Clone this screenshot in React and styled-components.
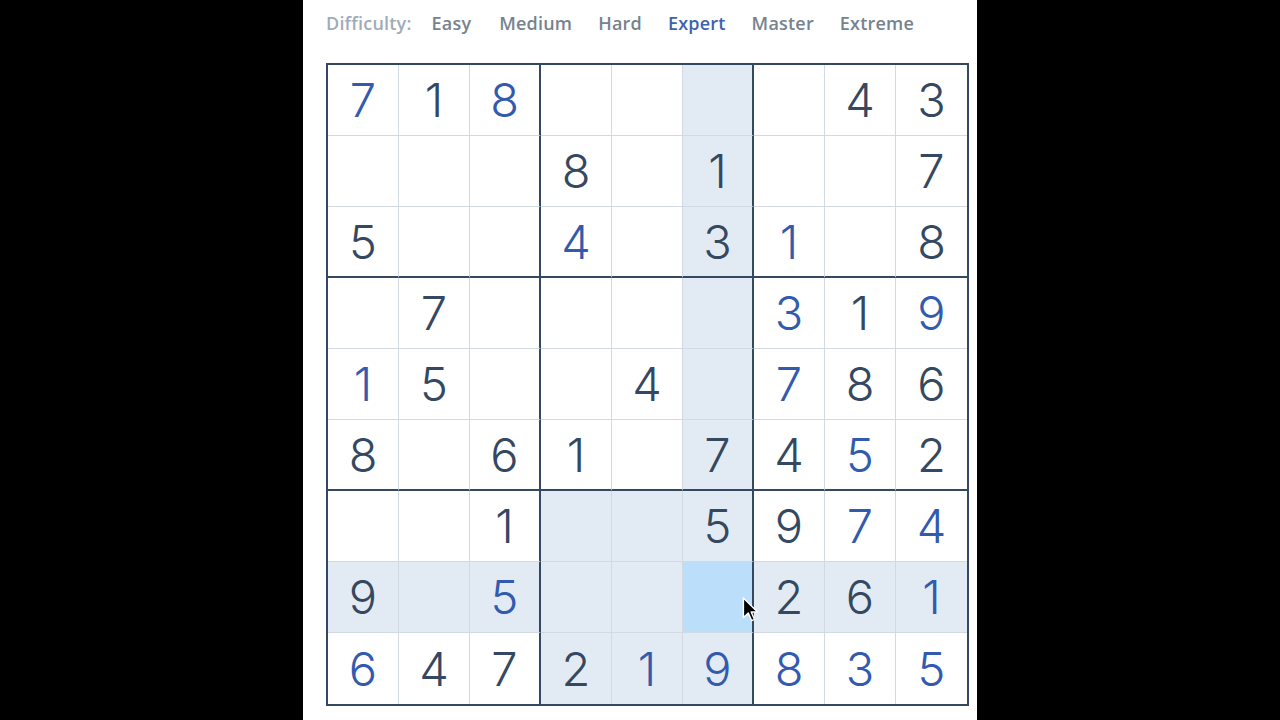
import React from 'react';
import styled, { createGlobalStyle } from 'styled-components';

const GlobalStyle = createGlobalStyle`
  html, body {
    margin: 0;
    padding: 0;
    background: #000;
    height: 100%;
  }
  #root {
    height: 100%;
  }
`;

const Screen = styled.div`
  width: 1280px;
  height: 720px;
  background: #000;
  display: flex;
  justify-content: center;
  overflow: hidden;
`;

const Panel = styled.div`
  width: 674px;
  height: 720px;
  background: #fff;
  display: flex;
  flex-direction: column;
  padding-left: 23px;
  box-sizing: border-box;
`;

const DifficultyBar = styled.div`
  height: 45px;
  display: flex;
  align-items: center;
  font-family: "Open Sans", "Liberation Sans", sans-serif;
  font-size: 18px;
  font-weight: 600;
  letter-spacing: 0.2px;
`;

const DiffLabel = styled.span`
  color: #a0abba;
  margin-right: 20px;
`;

const DiffOption = styled.span`
  color: ${({ active }) => (active ? '#3d62b0' : '#76838f')};
  margin-right: ${({ wide }) => (wide ? '28px' : '26px')};
`;

const BoardWrap = styled.div`
  margin-top: 18px;
  position: relative;
  width: 643px;
`;

const Board = styled.div`
  display: grid;
  grid-template-columns: repeat(9, 71px);
  grid-template-rows: repeat(9, 71px);
  border: 2px solid #344861;
  width: max-content;
`;

const Cell = styled.div`
  box-sizing: border-box;
  display: flex;
  align-items: center;
  justify-content: center;
  background: ${({ tone }) =>
    tone === 'selected' ? '#bbdefb' : tone === 'related' ? '#e2ebf3' : '#fff'};
  border-right: ${({ col }) =>
    col === 8 ? 'none' : col % 3 === 2 ? '2px solid #344861' : '1px solid #d3d9e2'};
  border-bottom: ${({ row }) =>
    row === 8 ? 'none' : row % 3 === 2 ? '2px solid #344861' : '1px solid #d3d9e2'};
  font-family: Inter, "Liberation Sans", sans-serif;
  font-weight: 300;
  font-size: 47px;
  line-height: 1;
  color: ${({ user }) => (user ? '#325aaf' : '#344861')};
  padding-bottom: 1px;
`;

const Cursor = styled.svg`
  position: absolute;
  left: 416px;
  top: 534px;
  pointer-events: none;
`;

// digits: "b" prefix = player entered (blue), plain = given
const PUZZLE = [
  ['b7', '1', 'b8', '', '', '', '', '4', '3'],
  ['', '', '', '8', '', '1', '', '', '7'],
  ['5', '', '', 'b4', '', '3', 'b1', '', '8'],
  ['', '7', '', '', '', '', 'b3', '1', 'b9'],
  ['b1', '5', '', '', '4', '', 'b7', '8', '6'],
  ['8', '', '6', '1', '', '7', '4', 'b5', '2'],
  ['', '', '1', '', '', '5', '9', 'b7', 'b4'],
  ['9', '', 'b5', '', '', '', '2', '6', 'b1'],
  ['b6', '4', '7', '2', 'b1', 'b9', 'b8', 'b3', 'b5'],
];

const SEL = { row: 7, col: 5 };

function toneFor(r, c) {
  if (r === SEL.row && c === SEL.col) return 'selected';
  const sameBox =
    Math.floor(r / 3) === Math.floor(SEL.row / 3) &&
    Math.floor(c / 3) === Math.floor(SEL.col / 3);
  if (r === SEL.row || c === SEL.col || sameBox) return 'related';
  return 'none';
}

const levels = ['Easy', 'Medium', 'Hard', 'Expert', 'Master', 'Extreme'];

export default function App() {
  return (
    <>
      <GlobalStyle />
      <Screen>
        <Panel>
          <DifficultyBar>
            <DiffLabel>Difficulty:</DiffLabel>
            {levels.map((l) => (
              <DiffOption key={l} active={l === 'Expert'} wide={l === 'Easy'}>
                {l}
              </DiffOption>
            ))}
          </DifficultyBar>
          <BoardWrap>
            <Board>
              {PUZZLE.map((row, r) =>
                row.map((v, c) => (
                  <Cell
                    key={`${r}-${c}`}
                    row={r}
                    col={c}
                    tone={toneFor(r, c)}
                    user={v.startsWith('b')}
                  >
                    {v.replace('b', '')}
                  </Cell>
                ))
              )}
            </Board>
            <Cursor width="18" height="26" viewBox="0 0 16 24">
              <path
                d="M1 1 L1 19 L5.5 14.8 L8.6 21.8 L11.2 20.7 L8.2 13.8 L14 13.8 Z"
                fill="#000"
                stroke="#fff"
                strokeWidth="1.3"
                strokeLinejoin="round"
              />
            </Cursor>
          </BoardWrap>
        </Panel>
      </Screen>
    </>
  );
}
